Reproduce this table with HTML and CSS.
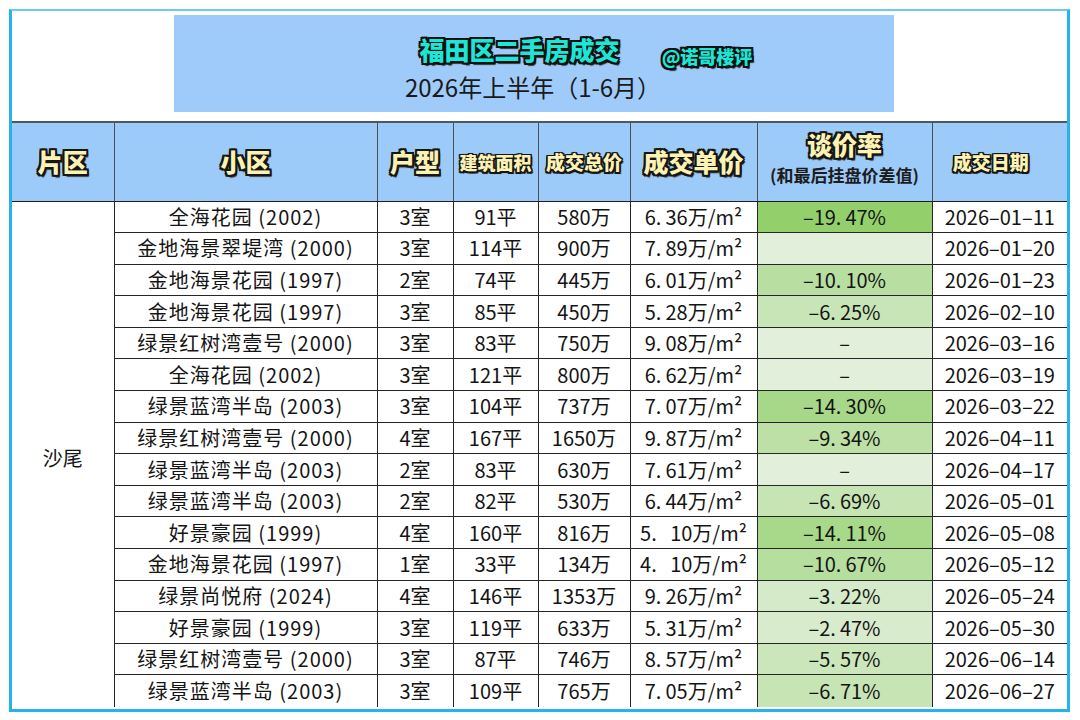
FILE: index.html
```html
<!DOCTYPE html>
<html lang="zh-CN">
<head>
<meta charset="utf-8">
<title>福田区二手房成交</title>
<link rel="stylesheet" href="styles.css">
</head>
<body>
<div class="frame">
  <div class="top">
    <div class="titlebox">
      <div class="titleline">
        <span class="title">福田区二手房成交</span>
        <span class="handle">@诺哥楼评</span>
      </div>
      <div class="subtitle">2026年上半年（1-6月）</div>
    </div>
  </div>
  <table class="deals">
    <colgroup>
      <col class="c-area"><col class="c-name"><col class="c-type"><col class="c-size">
      <col class="c-total"><col class="c-unit"><col class="c-rate"><col class="c-date">
    </colgroup>
    <thead>
      <tr>
        <th><span class="ol big">片区</span></th>
        <th><span class="ol big">小区</span></th>
        <th><span class="ol big">户型</span></th>
        <th><span class="ol small">建筑面积</span></th>
        <th><span class="ol small total">成交总价</span></th>
        <th><span class="ol big">成交单价</span></th>
        <th><span class="ol big rate">谈价率</span><span class="note">(和最后挂盘价差值)</span></th>
        <th class="date-h"><span class="ol small total">成交日期</span></th>
      </tr>
    </thead>
    <tbody>
      <tr><td rowspan="16" class="area">沙尾</td><td class="name">全海花园 (2002)</td><td>3室</td><td>91平</td><td>580万</td><td>6.&#8201;36万/m²</td><td style="background:#93d06c">–19.&#8201;47%</td><td>2026–01–11</td></tr>
      <tr><td class="name">金地海景翠堤湾 (2000)</td><td>3室</td><td>114平</td><td>900万</td><td>7.&#8201;89万/m²</td><td style="background:#e2efda"></td><td>2026–01–20</td></tr>
      <tr><td class="name">金地海景花园 (1997)</td><td>2室</td><td>74平</td><td>445万</td><td>6.&#8201;01万/m²</td><td style="background:#b8dfa1">–10.&#8201;10%</td><td>2026–01–23</td></tr>
      <tr><td class="name">金地海景花园 (1997)</td><td>3室</td><td>85平</td><td>450万</td><td>5.&#8201;28万/m²</td><td style="background:#c8e5b7">–6.&#8201;25%</td><td>2026–02–10</td></tr>
      <tr><td class="name">绿景红树湾壹号 (2000)</td><td>3室</td><td>83平</td><td>750万</td><td>9.&#8201;08万/m²</td><td style="background:#e2efda">–</td><td>2026–03–16</td></tr>
      <tr><td class="name">全海花园 (2002)</td><td>3室</td><td>121平</td><td>800万</td><td>6.&#8201;62万/m²</td><td style="background:#e2efda">–</td><td>2026–03–19</td></tr>
      <tr><td class="name">绿景蓝湾半岛 (2003)</td><td>3室</td><td>104平</td><td>737万</td><td>7.&#8201;07万/m²</td><td style="background:#a7d889">–14.&#8201;30%</td><td>2026–03–22</td></tr>
      <tr><td class="name">绿景红树湾壹号 (2000)</td><td>4室</td><td>167平</td><td>1650万</td><td>9.&#8201;87万/m²</td><td style="background:#bce0a5">–9.&#8201;34%</td><td>2026–04–11</td></tr>
      <tr><td class="name">绿景蓝湾半岛 (2003)</td><td>2室</td><td>83平</td><td>630万</td><td>7.&#8201;61万/m²</td><td style="background:#e2efda">–</td><td>2026–04–17</td></tr>
      <tr><td class="name">绿景蓝湾半岛 (2003)</td><td>2室</td><td>82平</td><td>530万</td><td>6.&#8201;44万/m²</td><td style="background:#c6e4b4">–6.&#8201;69%</td><td>2026–05–01</td></tr>
      <tr><td class="name">好景豪园 (1999)</td><td>4室</td><td>160平</td><td>816万</td><td>5.&nbsp;&nbsp;&nbsp;10万/m²</td><td style="background:#a8d98a">–14.&#8201;11%</td><td>2026–05–08</td></tr>
      <tr><td class="name">金地海景花园 (1997)</td><td>1室</td><td>33平</td><td>134万</td><td>4.&nbsp;&nbsp;&nbsp;10万/m²</td><td style="background:#b6de9e">–10.&#8201;67%</td><td>2026–05–12</td></tr>
      <tr><td class="name">绿景尚悦府 (2024)</td><td>4室</td><td>146平</td><td>1353万</td><td>9.&#8201;26万/m²</td><td style="background:#d5eac8">–3.&#8201;22%</td><td>2026–05–24</td></tr>
      <tr><td class="name">好景豪园 (1999)</td><td>3室</td><td>119平</td><td>633万</td><td>5.&#8201;31万/m²</td><td style="background:#d8ebcc">–2.&#8201;47%</td><td>2026–05–30</td></tr>
      <tr><td class="name">绿景红树湾壹号 (2000)</td><td>3室</td><td>87平</td><td>746万</td><td>8.&#8201;57万/m²</td><td style="background:#cbe6bb">–5.&#8201;57%</td><td>2026–06–14</td></tr>
      <tr><td class="name">绿景蓝湾半岛 (2003)</td><td>3室</td><td>109平</td><td>765万</td><td>7.&#8201;05万/m²</td><td style="background:#c6e4b4">–6.&#8201;71%</td><td>2026–06–27</td></tr>
    </tbody>
  </table>
</div>
</body>
</html>
```

FILE: styles.css
```css
* { box-sizing: border-box; }

body {
  margin: 0;
  background: #ffffff;
  font-family: "Noto Sans CJK SC", "Noto Sans", sans-serif;
  color: #141414;
}

.frame {
  margin: 9px 0 0 9px;
  width: 1061px;
  height: 703px;
  border: 3px solid #25b3ea;
  border-top: 2px solid #6cc9ef;
  overflow: hidden;
  background: #ffffff;
}

.top {
  height: 110px;
  padding: 4px 0 0 162px;
}

.titlebox {
  width: 720px;
  height: 97px;
  background: #9ecbf9;
  display: flex;
  flex-direction: column;
  align-items: center;
  padding-top: 20px;
}

.titleline {
  display: flex;
  align-items: flex-end;
  justify-content: center;
  gap: 42px;
  padding-left: 104px;
  height: 27px;
}

.title {
  font-size: 25px;
  font-weight: 900;
  line-height: 1;
  color: #1ee6d6;
  text-shadow:
    -2px -2px 0 #101010, 0 -2px 0 #101010, 2px -2px 0 #101010, 2px 0 0 #101010,
    2px 2px 0 #101010, 0 2px 0 #101010, -2px 2px 0 #101010, -2px 0 0 #101010,
    2px 3px 1px #333;
}

.handle {
  font-size: 18px;
  font-weight: 900;
  line-height: 1;
  color: #1ee6d6;
  margin-bottom: -3px;
  text-shadow:
    -2px -2px 0 #101010, 0 -2px 0 #101010, 2px -2px 0 #101010, 2px 0 0 #101010,
    2px 2px 0 #101010, 0 2px 0 #101010, -2px 2px 0 #101010, -2px 0 0 #101010,
    2px 3px 1px #333;
}

.subtitle {
  margin-top: 13px;
  font-size: 24px;
  line-height: 1;
  color: #1a1a1a;
  padding-right: 2px;
}

.deals {
  width: 1055px;
  border-collapse: collapse;
  table-layout: fixed;
  border-top: 2px solid #4b5963;
}

.c-area { width: 102px; }
.c-name { width: 263px; }
.c-type { width: 76px; }
.c-size { width: 85px; }
.c-total { width: 92px; }
.c-unit { width: 127px; }
.c-rate { width: 175px; }
.c-date { width: 135px; }

.deals th {
  height: 79px;
  background: #9dcbf9;
  border-left: 1px solid #4a4f55;
  border-bottom: 1px solid #1e1e1e;
  padding: 0;
  text-align: center;
  vertical-align: middle;
  font-weight: 900;
}

.deals th:first-child { border-left: none; }
.deals th.date-h { padding-right: 18px; }

.ol {
  display: block;
  color: #fbf2b4;
  line-height: 1;
  font-weight: 900;
  white-space: nowrap;
}

.big {
  font-size: 25px;
  text-shadow:
    -2px -2px 0 #161616, 0 -2px 0 #161616, 2px -2px 0 #161616, 2px 0 0 #161616,
    2px 2px 0 #161616, 0 2px 0 #161616, -2px 2px 0 #161616, -2px 0 0 #161616,
    2px 3px 1px #444;
}

.small {
  font-size: 18px;
  text-shadow:
    -1.5px -1.5px 0 #161616, 0 -1.5px 0 #161616, 1.5px -1.5px 0 #161616, 1.5px 0 0 #161616,
    1.5px 1.5px 0 #161616, 0 1.5px 0 #161616, -1.5px 1.5px 0 #161616, -1.5px 0 0 #161616,
    2px 2px 1px #444;
}

.small.total { font-size: 19px; }

.rate { margin-top: -8px; }

.note {
  display: block;
  margin-top: 9px;
  font-size: 17px;
  font-weight: 700;
  line-height: 1;
  color: #1c1c1c;
  white-space: nowrap;
}

.deals td {
  height: 31.6px;
  padding: 0;
  border: 1px solid #262626;
  text-align: center;
  vertical-align: middle;
  font-size: 20px;
  line-height: 1;
  white-space: nowrap;
  color: #141414;
}

.deals td.name {
  letter-spacing: 1px;
}

.deals td:last-child { border-right: none; }
.deals tbody tr:last-child td { border-bottom: none; }

.deals td.area {
  border-left: none;
  border-bottom: none;
  padding: 8px 0 0 0;
}
```
